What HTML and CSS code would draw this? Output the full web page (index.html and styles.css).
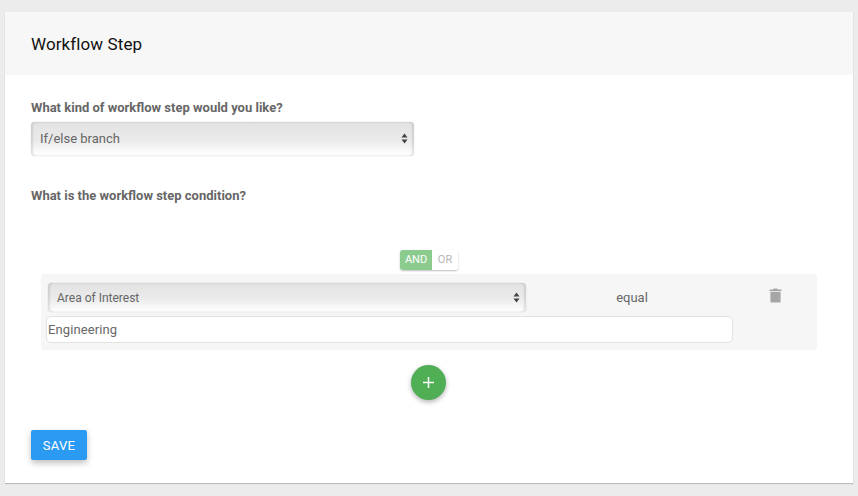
FILE: index.html
```html
<!DOCTYPE html>
<html>
<head>
<title>Workflow Step</title>
<link rel="stylesheet" href="styles.css">
</head>
<body>

<div class="card">
  <div class="card-header">Workflow Step</div>
  <div class="card-body">
    <div class="label">What kind of workflow step would you like?</div>
    <div class="select step-select">
      <span>If/else branch</span>
      <svg class="arrows" width="7" height="11" viewBox="0 0 7 11"><path d="M3.5 0.5 L6.5 4.5 H0.5 Z M3.5 10.5 L0.5 6.5 H6.5 Z" fill="#444"/></svg>
    </div>
    <div class="label condition-label">What is the workflow step condition?</div>

    <div class="toggle">
      <span class="toggle-on">AND</span>
      <span class="toggle-off">OR</span>
    </div>

    <div class="rule">
      <div class="rule-top">
        <div class="select rule-select">
          <span>Area of Interest</span>
          <svg class="arrows" width="7" height="11" viewBox="0 0 7 11"><path d="M3.5 0.5 L6.5 4.5 H0.5 Z M3.5 10.5 L0.5 6.5 H6.5 Z" fill="#444"/></svg>
        </div>
        <div class="operator">equal</div>
        <svg class="trash" width="13" height="15" viewBox="0 0 14 16">
          <path d="M5 0.5 H9 L9.5 1.5 H13.5 V3.2 H0.5 V1.5 H4.5 Z" fill="#a6a6a6"/>
          <path d="M1.5 4 H12.5 V14.5 Q12.5 15.5 11.5 15.5 H2.5 Q1.5 15.5 1.5 14.5 Z" fill="#a6a6a6"/>
        </svg>
      </div>
      <input class="rule-input" type="text" value="Engineering">
    </div>

    <div class="add-row">
      <button class="add-btn">
        <svg width="13" height="13" viewBox="0 0 13 13"><path d="M6.5 1 V12 M1 6.5 H12" stroke="#fff" stroke-width="1.5"/></svg>
      </button>
    </div>

    <button class="save-btn">SAVE</button>
  </div>
</div>

</body>
</html>
```

FILE: styles.css
```css
html, body {
  height: 100%;
}

body {
  margin: 0;
  padding: 12px 5px 13px;
  box-sizing: border-box;
  overflow: hidden;
  background-color: #ececec;
  font-family: Roboto, "Liberation Sans", sans-serif;
  color: #555;
}

.card {
  height: 471px;
  background-color: #fff;
  box-shadow: 0 1px 1px rgba(0, 0, 0, 0.2);
}

.card-header {
  height: 63px;
  padding-left: 26px;
  line-height: 64px;
  font-size: 17px;
  letter-spacing: 0.1px;
  color: #111;
  background-color: #f7f7f7;
}

.card-body {
  padding: 25px 26px 0;
}

.label {
  font-size: 13px;
  font-weight: 700;
  line-height: 16px;
  color: #666;
}

.select {
  display: flex;
  align-items: center;
  justify-content: space-between;
  box-sizing: border-box;
  border-radius: 4px;
  background: linear-gradient(to bottom, #e2e2e2 0%, #ebebeb 55%, #fbfbfb 90%, #fff 100%);
  box-shadow: inset 2px 0 2px rgba(0, 0, 0, 0.1), inset -2px 0 2px rgba(0, 0, 0, 0.1), 0 0 1px rgba(0, 0, 0, 0.3);
  font-size: 12px;
  color: #666;
}

.step-select {
  width: 383px;
  height: 34px;
  margin-top: 6px;
  padding: 0 6px 2px 9px;
  font-size: 13px;
}

.condition-label {
  margin-top: 32px;
}

.arrows {
  display: block;
}

.toggle {
  display: flex;
  width: 58px;
  height: 20px;
  margin: 46px auto 0;
  border-radius: 3px;
  overflow: hidden;
  font-size: 11px;
  line-height: 20px;
  text-align: center;
  box-shadow: 0 1px 2px rgba(0, 0, 0, 0.25);
}

.toggle-on {
  width: 32px;
  color: #fff;
  background-color: #8ccb8e;
}

.toggle-off {
  width: 26px;
  color: #b5b5b5;
  background-color: #fff;
}

.rule {
  width: 776px;
  height: 76px;
  box-sizing: border-box;
  margin: 4px 0 0 10px;
  padding: 9px 5px 0;
  border-radius: 3px;
  background-color: #f6f6f6;
}

.rule-top {
  display: flex;
  align-items: center;
  height: 29px;
}

.rule-select {
  width: 478px;
  height: 29px;
  margin-left: 2px;
  padding: 0 6px 0 9px;
}

.operator {
  width: 212px;
  font-size: 13px;
  text-align: center;
  color: #666;
}

.trash {
  margin-left: 31px;
  margin-bottom: 4px;
}

.rule-input {
  display: block;
  width: 687px;
  height: 27px;
  box-sizing: border-box;
  margin-top: 4px;
  padding: 0 1px;
  border: 1px solid #e2e2e2;
  border-radius: 5px;
  background-color: #fff;
  font-family: inherit;
  font-size: 13px;
  letter-spacing: 0.1px;
  color: #666;
}

.add-row {
  display: flex;
  justify-content: center;
  margin-top: 15px;
  padding-right: 1px;
}

.add-btn {
  display: flex;
  align-items: center;
  justify-content: center;
  width: 35px;
  height: 35px;
  padding: 0;
  border: none;
  border-radius: 50%;
  background-color: #50ae55;
  box-shadow: 0 2px 5px rgba(0, 0, 0, 0.3);
}

.save-btn {
  display: block;
  width: 56px;
  height: 30px;
  margin-top: 30px;
  padding: 0;
  border: none;
  border-radius: 2px;
  background-color: #2b9af3;
  color: #fff;
  font-family: inherit;
  font-size: 13px;
  letter-spacing: 0.3px;
  box-shadow: 0 3px 6px rgba(0, 0, 0, 0.25);
}
```
